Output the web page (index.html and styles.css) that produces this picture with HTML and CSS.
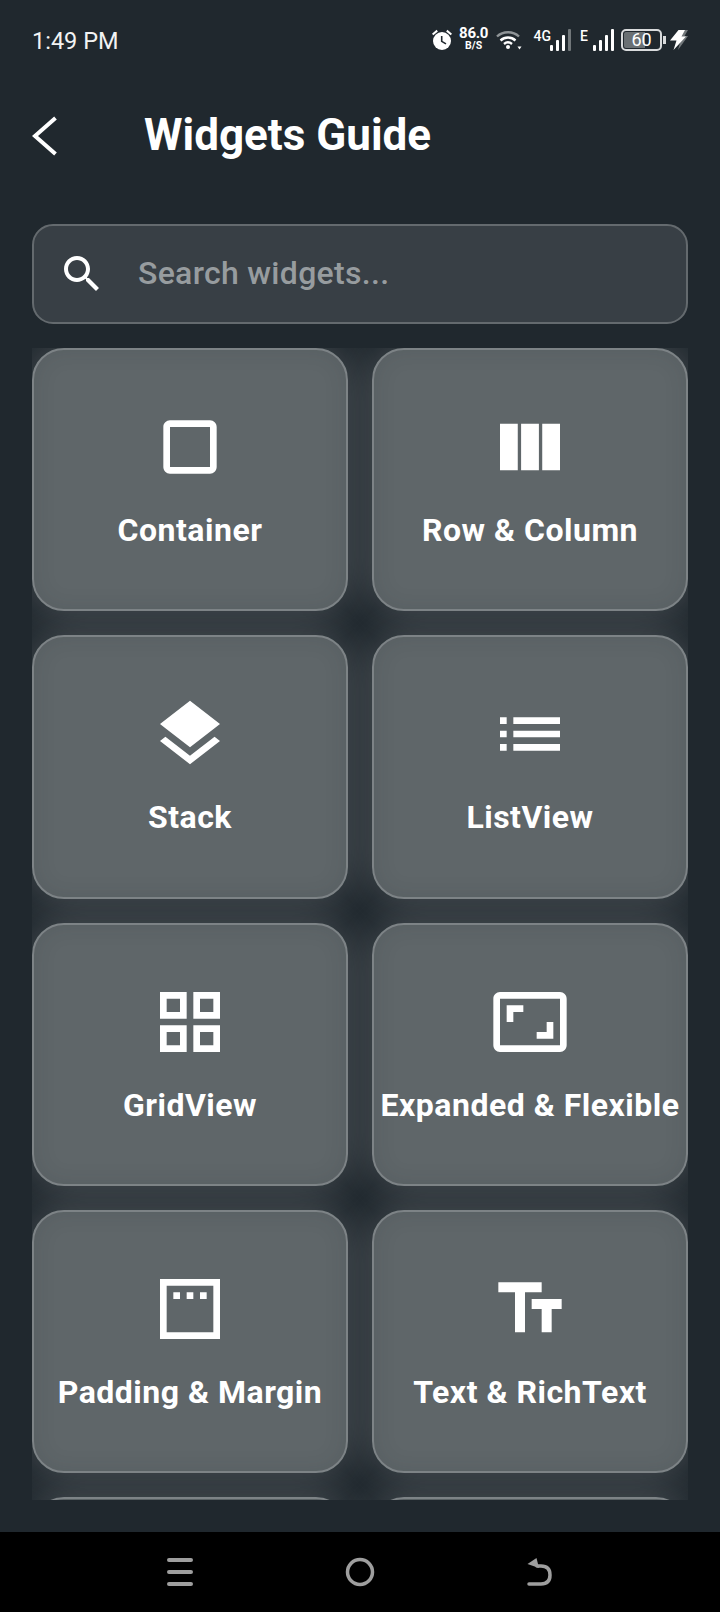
FILE: index.html
```html
<!DOCTYPE html>
<html lang="en">
<head>
    <meta charset="UTF-8">
    <meta name="viewport" content="width=device-width, initial-scale=1.0">
    <title>Widgets Guide</title>
    <link rel="stylesheet" href="styles.css">
</head>
<body>
    <div class="status-bar">
        <span class="status-time">1:49 PM</span>
        <div class="status-icons">
            <svg class="alarm-icon" viewBox="0 0 24 24" width="24" height="24">
                <path fill="#fff" d="M22 5.72l-4.6-3.86-1.29 1.53 4.6 3.86L22 5.72zM7.88 3.39L6.6 1.86 2 5.71l1.29 1.53 4.59-3.85z"/>
                <circle cx="12" cy="13" r="9" fill="#fff"/>
                <path fill="none" stroke="#20282e" stroke-width="1.6" d="M11.7 8v5.4l4.3 2.5"/>
            </svg>
            <div class="net-speed">
                <span class="net-speed-value">86.0</span>
                <span class="net-speed-unit">B/S</span>
            </div>
            <svg class="wifi-icon" viewBox="0 0 26 20" width="26" height="20">
                <path fill="none" stroke="#8f9497" stroke-width="2.4" d="M1 6.5C7 .8 17 .8 23 6.5"/>
                <path fill="none" stroke="#fff" stroke-width="2.4" d="M4.5 10.5c4.4-4 10.6-4 15 0M8 14c2.4-2 5.6-2 8 0"/>
                <circle cx="12" cy="17" r="2" fill="#fff"/>
                <path fill="#fff" d="M21.5 16.5h4l-2 3z"/>
            </svg>
            <div class="net-signal net-signal-4g">
                <span class="net-label">4G</span>
                <svg viewBox="0 0 21 22" width="21" height="22">
                    <rect x="0" y="16" width="3" height="6" rx="1" fill="#fff"/>
                    <rect x="6" y="11" width="3" height="11" rx="1" fill="#fff"/>
                    <rect x="12" y="6" width="3" height="16" rx="1" fill="#fff"/>
                    <rect x="18" y="0" width="3" height="22" rx="1" fill="#71777a"/>
                </svg>
            </div>
            <div class="net-signal net-signal-e">
                <span class="net-label">E</span>
                <svg viewBox="0 0 21 22" width="21" height="22">
                    <rect x="0" y="16" width="3" height="6" rx="1" fill="#fff"/>
                    <rect x="6" y="11" width="3" height="11" rx="1" fill="#fff"/>
                    <rect x="12" y="6" width="3" height="16" rx="1" fill="#fff"/>
                    <rect x="18" y="0" width="3" height="22" rx="1" fill="#fff"/>
                </svg>
            </div>
            <div class="battery"><span class="battery-level">60</span></div>
            <span class="battery-tip"></span>
            <svg class="bolt-icon" viewBox="0 0 18 22" width="18" height="22">
                <path fill="#71777a" d="M12 1h6l-3.500 6H18L8 21l2.500-9H7z"/>
                <path fill="#fff" d="M8.500 1H15l-3.500 6.500H16L3.500 21l3-9.500H0z"/>
            </svg>
        </div>
    </div>

    <header class="app-header">
        <svg class="back-icon" viewBox="0 0 26 40" width="26" height="40">
            <path fill="none" stroke="#fff" stroke-width="4" d="M23.500 2 3 20l20.500 18"/>
        </svg>
        <h1 class="app-title">Widgets Guide</h1>
    </header>

    <div class="search-box">
        <svg class="search-icon" viewBox="0 0 24 24" width="48" height="48">
            <path fill="#fff" d="M15.5 14h-.79l-.28-.27C15.41 12.59 16 11.11 16 9.5 16 5.91 13.09 3 9.5 3S3 5.91 3 9.5 5.91 16 9.5 16c1.61 0 3.09-.59 4.23-1.57l.27.28v.79l5 4.99L20.490 19l-4.990-5zm-6 0C7.010 14 5 11.990 5 9.500S7.010 5 9.500 5 14 7.010 14 9.500 11.990 14 9.500 14z"/>
        </svg>
        <span class="search-placeholder">Search widgets...</span>
    </div>

    <main class="widget-grid">
        <div class="widget-card">
            <svg class="widget-icon" viewBox="0 0 24 24"><path d="M18 4H6c-1.100 0-2 .9-2 2v12c0 1.100.9 2 2 2h12c1.100 0 2-.9 2-2V6c0-1.100-.9-2-2-2zm0 14H6V6h12v12z"/></svg>
            <span class="widget-name">Container</span>
        </div>
        <div class="widget-card">
            <svg class="widget-icon" viewBox="0 0 24 24"><path d="M14.670 5v14H9.330V5h5.340zm1 14H21V5h-5.330v14zm-7.340 0V5H3v14h5.330z"/></svg>
            <span class="widget-name">Row &amp; Column</span>
        </div>
        <div class="widget-card">
            <svg class="widget-icon" viewBox="0 0 24 24"><path d="M11.990 18.540l-7.370-5.730L3 14.070l9 7 9-7-1.630-1.270-7.380 5.740zM12 16l7.360-5.730L21 9l-9-7-9 7 1.630 1.270L12 16z"/></svg>
            <span class="widget-name">Stack</span>
        </div>
        <div class="widget-card">
            <svg class="widget-icon" viewBox="0 0 24 24"><path d="M3 13h2v-2H3v2zm0 4h2v-2H3v2zm0-8h2V7H3v2zm4 4h14v-2H7v2zm0 4h14v-2H7v2zM7 7v2h14V7H7z"/></svg>
            <span class="widget-name">ListView</span>
        </div>
        <div class="widget-card">
            <svg class="widget-icon" viewBox="0 0 24 24"><path d="M3 3v8h8V3H3zm6 6H5V5h4v4zm-6 4v8h8v-8H3zm6 6H5v-4h4v4zm4-16v8h8V3h-8zm6 6h-4V5h4v4zm-6 4v8h8v-8h-8zm6 6h-4v-4h4v4z"/></svg>
            <span class="widget-name">GridView</span>
        </div>
        <div class="widget-card">
            <svg class="widget-icon" viewBox="0 0 24 24"><path d="M19 12h-2v3h-3v2h5v-5zM7 9h3V7H5v5h2V9zm14-6H3c-1.100 0-2 .9-2 2v14c0 1.100.9 2 2 2h18c1.100 0 2-.9 2-2V5c0-1.100-.9-2-2-2zm0 16.010H3V4.990h18v14.020z"/></svg>
            <span class="widget-name">Expanded &amp; Flexible</span>
        </div>
        <div class="widget-card">
            <svg class="widget-icon" viewBox="0 0 24 24"><path d="M3 3v18h18V3H3zm16 16H5V5h14v14zM11 7h2v2h-2zM7 7h2v2H7zm8 0h2v2h-2z"/></svg>
            <span class="widget-name">Padding &amp; Margin</span>
        </div>
        <div class="widget-card">
            <svg class="widget-icon" viewBox="0 0 24 24"><path d="M2.500 4v3h5v12h3V7h5V4h-13zm19 5h-9v3h3v7h3v-7h3V9z"/></svg>
            <span class="widget-name">Text &amp; RichText</span>
        </div>
        <!-- next row, scrolled off below the fold -->
        <div class="widget-card"></div>
        <div class="widget-card"></div>
    </main>

    <nav class="nav-bar">
        <svg viewBox="0 0 28 30" width="28" height="30">
            <path fill="none" stroke="#9e9e9e" stroke-width="4" stroke-linecap="round" d="M3 3h22M3 15h22M3 27h22"/>
        </svg>
        <svg viewBox="0 0 30 30" width="30" height="30">
            <circle cx="15" cy="15" r="12.500" fill="none" stroke="#9e9e9e" stroke-width="3.500"/>
        </svg>
        <svg viewBox="0 0 28 30" width="28" height="30">
            <path fill="none" stroke="#9e9e9e" stroke-width="3.500" stroke-linecap="round" d="M3 27h12c6 0 9-3 9-9s-3-9-9-9h-4"/>
            <path fill="#9e9e9e" d="M10.500 1 1.500 7l11.500 4z"/>
        </svg>
    </nav>
</body>
</html>
```

FILE: styles.css
```css
* {
    box-sizing: border-box;
}
body {
    margin: 0;
    width: 720px;
    height: 1612px;
    overflow: hidden;
    display: flex;
    flex-direction: column;
    background-color: #20282e;
    color: #fff;
    font-family: Roboto, "Liberation Sans", sans-serif;
}

/* status bar */
.status-bar {
    height: 80px;
    padding: 0 32px;
    display: flex;
    align-items: center;
    justify-content: space-between;
    flex-shrink: 0;
}
.status-time {
    font-size: 23.5px;
    color: #f2f3f3;
    padding-top: 1px;
}
.status-icons {
    display: flex;
    align-items: center;
}
.alarm-icon {
    margin-right: 6px;
}
.net-speed {
    width: 28px;
    margin: -4px 8px 0 0;
    display: flex;
    flex-direction: column;
    align-items: center;
    font-weight: 700;
}
.net-speed-value {
    font-size: 15px;
    line-height: 14px;
    letter-spacing: -0.3px;
    white-space: nowrap;
}
.net-speed-unit {
    font-size: 10.5px;
    line-height: 11px;
}
.wifi-icon {
    margin-right: 12px;
}
.net-signal {
    height: 22px;
    display: flex;
    align-items: flex-start;
}
.net-signal-4g {
    margin-right: 9px;
}
.net-signal-e {
    margin-right: 7px;
}
.net-label {
    font-size: 14px;
    font-weight: 500;
    line-height: 14px;
    margin-right: -1px;
}
.net-signal-e .net-label {
    margin-right: 5px;
}
.battery {
    width: 41px;
    height: 22px;
    border: 2px solid #d9dbdc;
    border-radius: 5px;
    background: linear-gradient(to right, #6a7073 60%, transparent 60%) content-box;
    padding: 1px;
    display: flex;
    align-items: center;
    justify-content: center;
}
.battery-level {
    font-size: 18px;
    line-height: 18px;
}
.battery-tip {
    width: 3px;
    height: 8px;
    margin: 0 4px 0 1px;
    background-color: #d9dbdc;
}

/* header */
.app-header {
    height: 112px;
    padding: 0 32px;
    display: flex;
    align-items: center;
    flex-shrink: 0;
}
.back-icon {
    flex-shrink: 0;
}
.app-title {
    margin: 0 0 2px 86px;
    font-size: 44px;
    font-weight: 700;
    line-height: 52px;
}

/* search */
.search-box {
    height: 100px;
    margin: 32px 32px 24px;
    padding: 0 24px;
    display: flex;
    align-items: center;
    flex-shrink: 0;
    background-color: #383f45;
    border: 2px solid #646a6e;
    border-radius: 21px;
}
.search-icon {
    flex-shrink: 0;
    margin-right: 32px;
}
.search-placeholder {
    margin-bottom: 2px;
    font-size: 32px;
    font-weight: 500;
    letter-spacing: 0.3px;
    color: #979c9f;
}

/* grid of widgets */
.widget-grid {
    height: 1152px;
    margin: 0 32px;
    overflow: hidden;
    isolation: isolate;
    flex-shrink: 0;
    display: grid;
    grid-template-columns: 316px 316px;
    grid-auto-rows: max-content;
    gap: 24px;
}
.widget-card {
    position: relative;
    aspect-ratio: 1.2;
    padding-top: 57px;
    display: flex;
    flex-direction: column;
    align-items: center;
    background-color: #5f6669;
    border: 2px solid #7d8386;
    border-radius: 32px;
    box-shadow: inset 0 0 22px rgba(32, 40, 46, 0.12);
}
/* glow sits behind every card, so a later card can't light up an earlier one */
.widget-card::before {
    content: "";
    position: absolute;
    inset: -2px;
    z-index: -1;
    border-radius: 32px;
    box-shadow: 0 0 40px rgba(255, 255, 255, 0.19);
}
.widget-icon {
    width: 80px;
    height: 80px;
    fill: #fff;
}
.widget-name {
    margin-top: 21px;
    font-size: 32px;
    font-weight: 700;
    letter-spacing: 0.5px;
    line-height: 44px;
    white-space: nowrap;
}

/* android nav bar */
.nav-bar {
    height: 80px;
    margin-top: auto;
    padding: 0 166px;
    display: flex;
    align-items: center;
    justify-content: space-between;
    flex-shrink: 0;
    background-color: #000;
}
```
